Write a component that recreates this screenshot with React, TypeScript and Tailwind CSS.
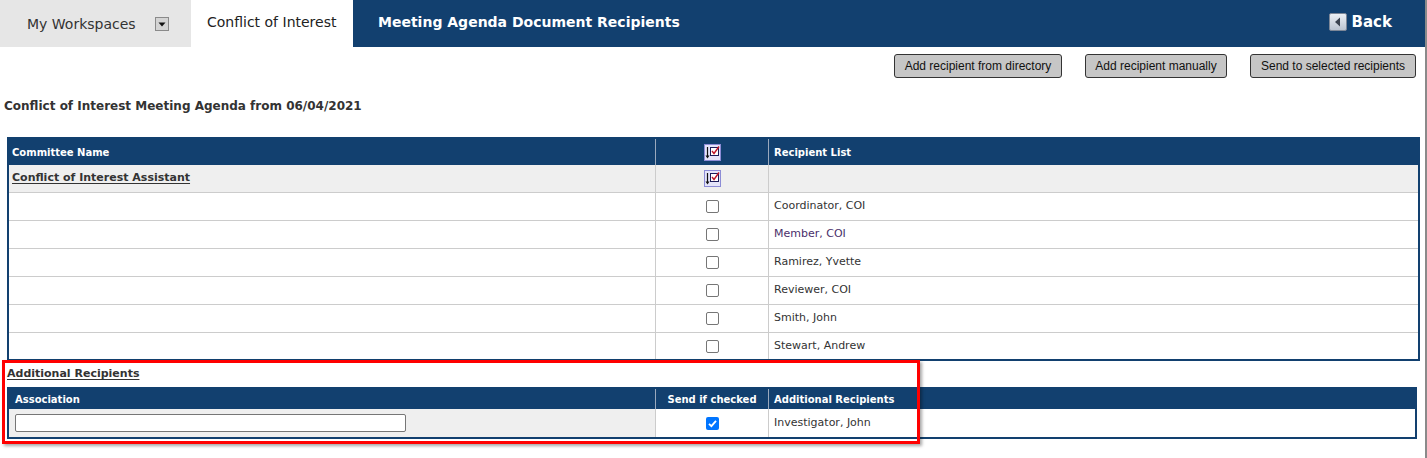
import React from 'react';

const recipients = [
    { name: 'Coordinator, COI', visited: false },
    { name: 'Member, COI', visited: true },
    { name: 'Ramirez, Yvette', visited: false },
    { name: 'Reviewer, COI', visited: false },
    { name: 'Smith, John', visited: false },
    { name: 'Stewart, Andrew', visited: false },
];

function DropdownIcon() {
    return (
        <svg width="14" height="14" viewBox="0 0 14 14">
            <rect x="0.5" y="0.5" width="13" height="13" fill="#d4d4d4" stroke="#8a8a8a" />
            <path d="M3.5 5.5 H10.5 L7 9.5 Z" fill="#111" />
        </svg>
    );
}

function BackIcon() {
    return (
        <svg width="18" height="18" viewBox="0 0 18 18">
            <defs>
                <linearGradient id="bk" x1="0" y1="0" x2="0" y2="1">
                    <stop offset="0" stopColor="#eef1f6" />
                    <stop offset="1" stopColor="#b9c2cf" />
                </linearGradient>
            </defs>
            <rect x="0.5" y="0.5" width="17" height="17" rx="1.5" fill="url(#bk)" stroke="#7d8797" />
            <path d="M11 4.5 V13.5 L6 9 Z" fill="#3b4350" />
        </svg>
    );
}

function SelectAllIcon() {
    return (
        <svg width="17" height="17" viewBox="0 0 17 17">
            <rect x="0.5" y="0.5" width="16" height="16" fill="#e4e4fa" stroke="#8c8cd6" />
            <rect x="6.5" y="3.5" width="8" height="8" fill="#fff" stroke="#1c1c5a" />
            <path d="M8 7 L10 9.5 L15 2.5" fill="none" stroke="#c0182a" strokeWidth="1.4" />
            <path d="M3.5 3 V13" stroke="#111" strokeWidth="1.2" />
            <path d="M1.5 11.5 L3.5 14.5 L5.5 11.5 Z" fill="#111" />
        </svg>
    );
}

function Checkbox({ checked = false }: { checked?: boolean }) {
    if (checked) {
        return (
            <svg width="13" height="13" viewBox="0 0 13 13">
                <rect x="0" y="0" width="13" height="13" rx="2" fill="#0075ff" />
                <path d="M3 6.8 L5.4 9.2 L10 3.8" fill="none" stroke="#fff" strokeWidth="1.8" />
            </svg>
        );
    }
    return <span className="block h-[13px] w-[13px] rounded-[2px] border border-[#767676] bg-white" />;
}

export default function App() {
    const font = { fontFamily: 'Verdana, "DejaVu Sans", sans-serif' };

    return (
        <div
            className="relative min-h-[458px] w-[1427px] border-r-2 border-[#8a8a8a] bg-white text-[#333]"
            style={font}
        >
            {/* Top bar */}
            <header className="flex h-[47px] items-stretch">
                <div className="flex w-[191px] items-center bg-[#e6e6e6] pl-[27px] pt-[2px] text-[14px] text-[#333]">
                    <span>My Workspaces</span>
                    <span className="ml-[19px] -mt-[2px]">
                        <DropdownIcon />
                    </span>
                </div>
                <div className="flex w-[162px] items-center bg-white pl-[16px] pb-[3px] text-[14px] text-[#222]">
                    Conflict of Interest
                </div>
                <div className="flex flex-1 items-center justify-between bg-[#12406f] pl-[25px] pr-[33px] pb-[3px] text-white">
                    <span className="text-[14px] font-bold">Meeting Agenda Document Recipients</span>
                    <span className="flex items-center gap-[5px] text-[15px] font-bold">
                        <BackIcon />
                        Back
                    </span>
                </div>
            </header>

            {/* Actions */}
            <div
                className="flex justify-end gap-[23px] pr-[9px] pt-[7px]"
                style={{ fontFamily: '"Liberation Sans", Arial, sans-serif' }}
            >
                <button className="h-[24px] w-[168px] rounded-[3px] border border-[#333] bg-[#c6c6c6] text-[12px] text-[#111]">
                    Add recipient from directory
                </button>
                <button className="h-[24px] w-[142px] rounded-[3px] border border-[#333] bg-[#c6c6c6] text-[12px] text-[#111]">
                    Add recipient manually
                </button>
                <button className="h-[24px] w-[166px] rounded-[3px] border border-[#333] bg-[#c6c6c6] text-[12px] text-[#111]">
                    Send to selected recipients
                </button>
            </div>

            <h2 className="mt-[20px] pl-[4px] text-[12px] font-bold leading-[16px] text-[#333]">
                Conflict of Interest Meeting Agenda from 06/04/2021
            </h2>

            {/* Committee table */}
            <div className="ml-[7px] mt-[23px] w-[1413px] border-2 border-[#12406f]">
                <div className="grid h-[26px] grid-cols-[646px_114px_1fr] bg-[#12406f] text-[10px] font-bold text-white">
                    <div className="flex items-center pl-[3px]">Committee Name</div>
                    <div className="flex items-center justify-center border-x border-[#9aa9bd]">
                        <SelectAllIcon />
                    </div>
                    <div className="flex items-center pl-[5px]">Recipient List</div>
                </div>
                <div className="grid h-[28px] grid-cols-[646px_114px_1fr] border-b border-[#cccccc] bg-[#efefef] text-[11px]">
                    <div className="flex items-center pl-[3px]">
                        <span className="font-bold underline underline-offset-2">Conflict of Interest Assistant</span>
                    </div>
                    <div className="flex items-center justify-center border-x border-[#cccccc]">
                        <SelectAllIcon />
                    </div>
                    <div />
                </div>
                {recipients.map((r, i) => (
                    <div
                        key={r.name}
                        className={`grid grid-cols-[646px_114px_1fr] text-[11px] ${i < recipients.length - 1 ? 'h-[28px] border-b border-[#cccccc]' : 'h-[26px]'}`}
                    >
                        <div />
                        <div className="flex items-center justify-center border-x border-[#cccccc]">
                            <Checkbox />
                        </div>
                        <div className={`flex items-center pl-[5px] ${r.visited ? 'text-[#4a2f6b]' : 'text-[#333]'}`}>
                            {r.name}
                        </div>
                    </div>
                ))}
            </div>

            {/* Additional recipients */}
            <div className="mt-[6px] pl-[7px] text-[11px] font-bold leading-[14px]">
                <span className="underline underline-offset-2">Additional Recipients</span>
            </div>
            <div className="ml-[7px] mt-[6px] w-[1410px] border-2 border-[#12406f]">
                <div className="grid h-[20px] grid-cols-[646px_114px_1fr] bg-[#12406f] text-[10px] font-bold text-white">
                    <div className="flex items-center pl-[6px]">Association</div>
                    <div className="flex items-center justify-center border-x border-[#9aa9bd]">Send if checked</div>
                    <div className="flex items-center pl-[5px]">Additional Recipients</div>
                </div>
                <div className="grid h-[28px] grid-cols-[646px_114px_1fr] text-[11px]">
                    <div className="flex items-center bg-[#efefef] pl-[6px]">
                        <input
                            type="text"
                            className="h-[18px] w-[391px] rounded-[2px] border border-[#767676] bg-white"
                        />
                    </div>
                    <div className="flex items-center justify-center border-x border-[#cccccc]">
                        <Checkbox checked />
                    </div>
                    <div className="flex items-center pl-[5px]">Investigator, John</div>
                </div>
            </div>

            {/* Highlight annotation */}
            <div className="pointer-events-none absolute left-[2px] top-[360px] h-[84px] w-[918px] border-[3px] border-[#ff0000] shadow-[2px_2px_3px_rgba(0,0,0,0.35)]" />
        </div>
    );
}
